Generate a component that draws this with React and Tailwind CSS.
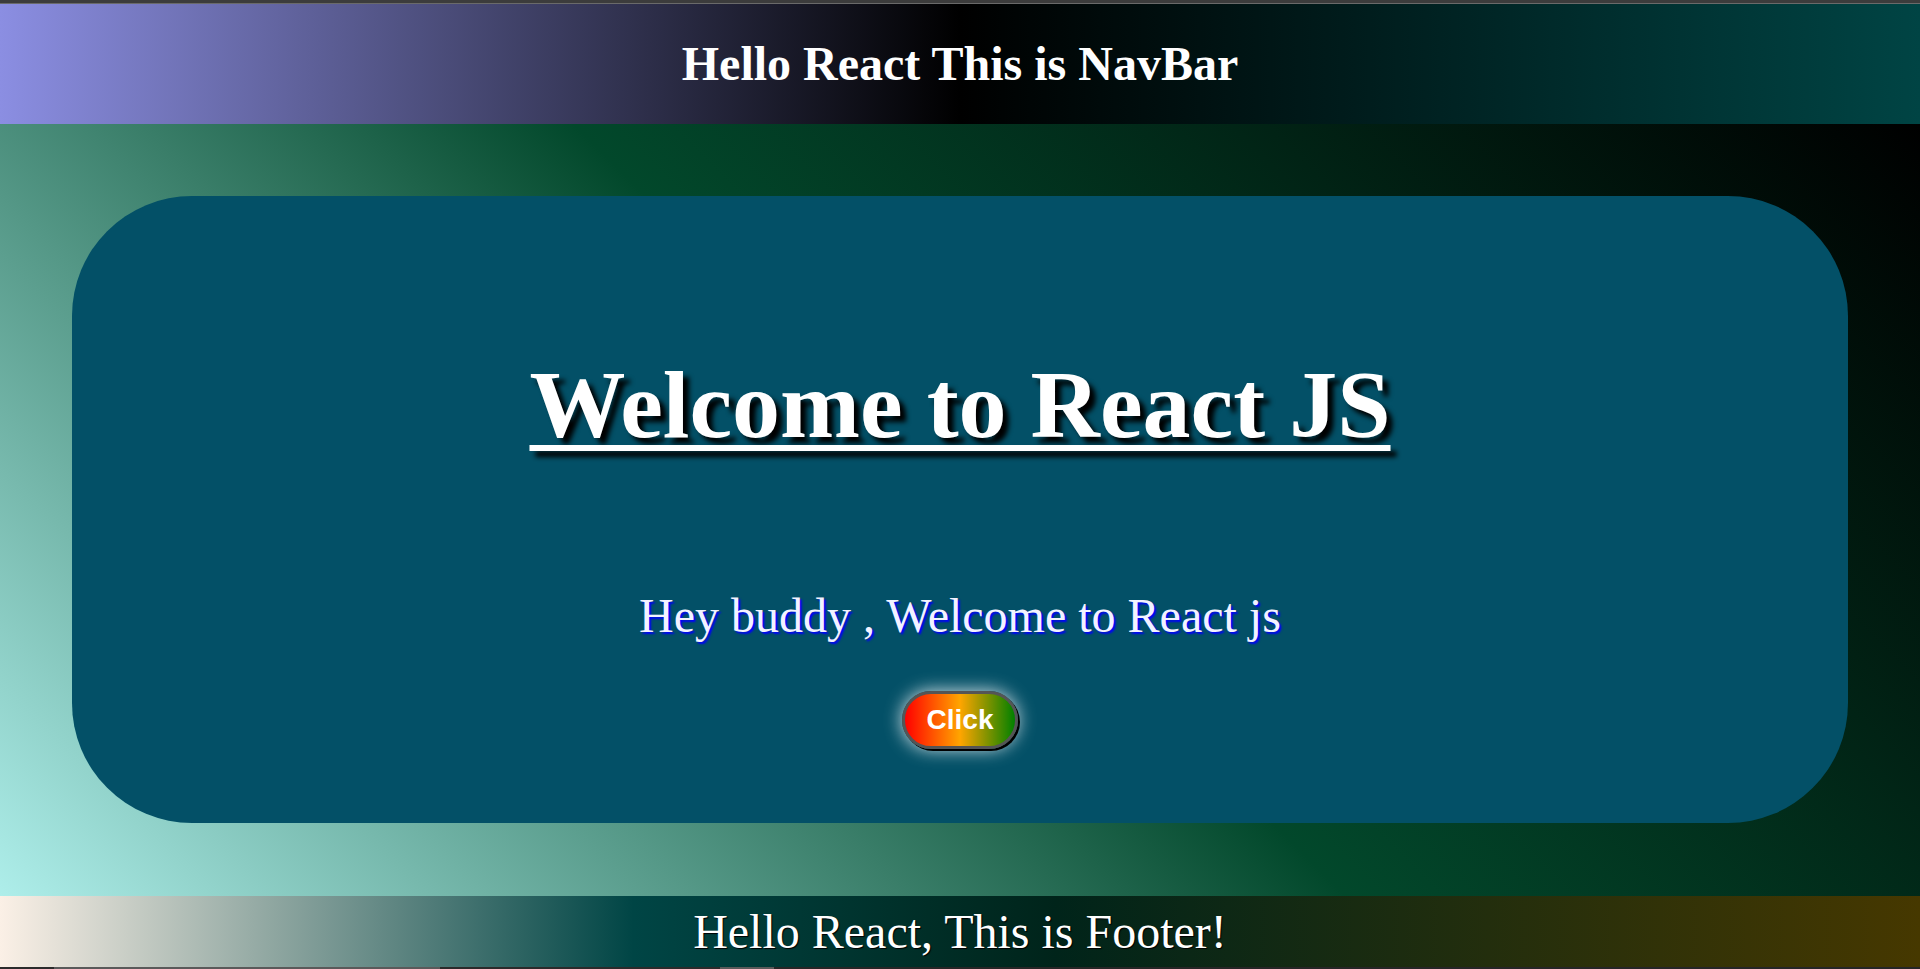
export default function App() {
  return (
    <div className="flex min-h-screen flex-col font-['Liberation_Serif',serif]">
      {/* window chrome strip at the top */}
      <div className="h-[3px] bg-[#3c3c3c]" />
      <div className="h-px bg-[#6a6a6a]" />

      <nav className="flex h-[120px] items-center justify-center bg-[linear-gradient(to_right,#8b8ee2,#000000_50%,#004444)]">
        <h2 className="text-[48px] font-bold leading-none text-white">Hello React This is NavBar</h2>
      </nav>

      <main className="flex h-[772px] bg-[linear-gradient(45deg,#aeeeea,#02482b_50%,#000000)] p-[72px] pb-[73px]">
        <div className="flex flex-1 flex-col items-center rounded-[120px] bg-[#035067] pt-[161px]">
          <h1 className="text-[96px] font-bold leading-none text-white underline decoration-[6px] underline-offset-[8px] [text-shadow:6px_6px_5px_#000]">
            Welcome to React JS
          </h1>
          <p className="mt-[139px] text-[48px] leading-none text-[#f3f3ff] [text-shadow:2px_2px_2px_#0000ff]">
            Hey buddy , Welcome to React js
          </p>
          <button
            type="button"
            className="mt-[51px] rounded-full border-[3px] border-[#555555] bg-[linear-gradient(to_right,#ff0000,#ffa500_50%,#008000)] px-[22px] py-[10px] font-['Liberation_Sans',sans-serif] text-[28px] font-bold leading-[32px] text-white shadow-[2px_2px_0_#000,0_0_18px_rgba(255,255,255,0.85)]"
          >
            Click
          </button>
        </div>
      </main>

      <footer className="flex h-[71px] items-center justify-center bg-[linear-gradient(to_right,#fbf0e6,#004545_33%,#00241a_55%,#463800)]">
        <p className="text-[48px] leading-none text-white [text-shadow:1px_1px_1px_#000]">Hello React, This is Footer!</p>
      </footer>

      {/* taskbar strip at the bottom */}
      <div className="flex h-[2px]">
        <div className="w-[54px] bg-[#2b2b2b]" />
        <div className="w-[386px] bg-[#5a5a5a]" />
        <div className="w-[280px] bg-[#2b2b2b]" />
        <div className="w-[54px] bg-[#5a5a5a]" />
        <div className="flex-1 bg-[#262626]" />
      </div>
    </div>
  );
}
